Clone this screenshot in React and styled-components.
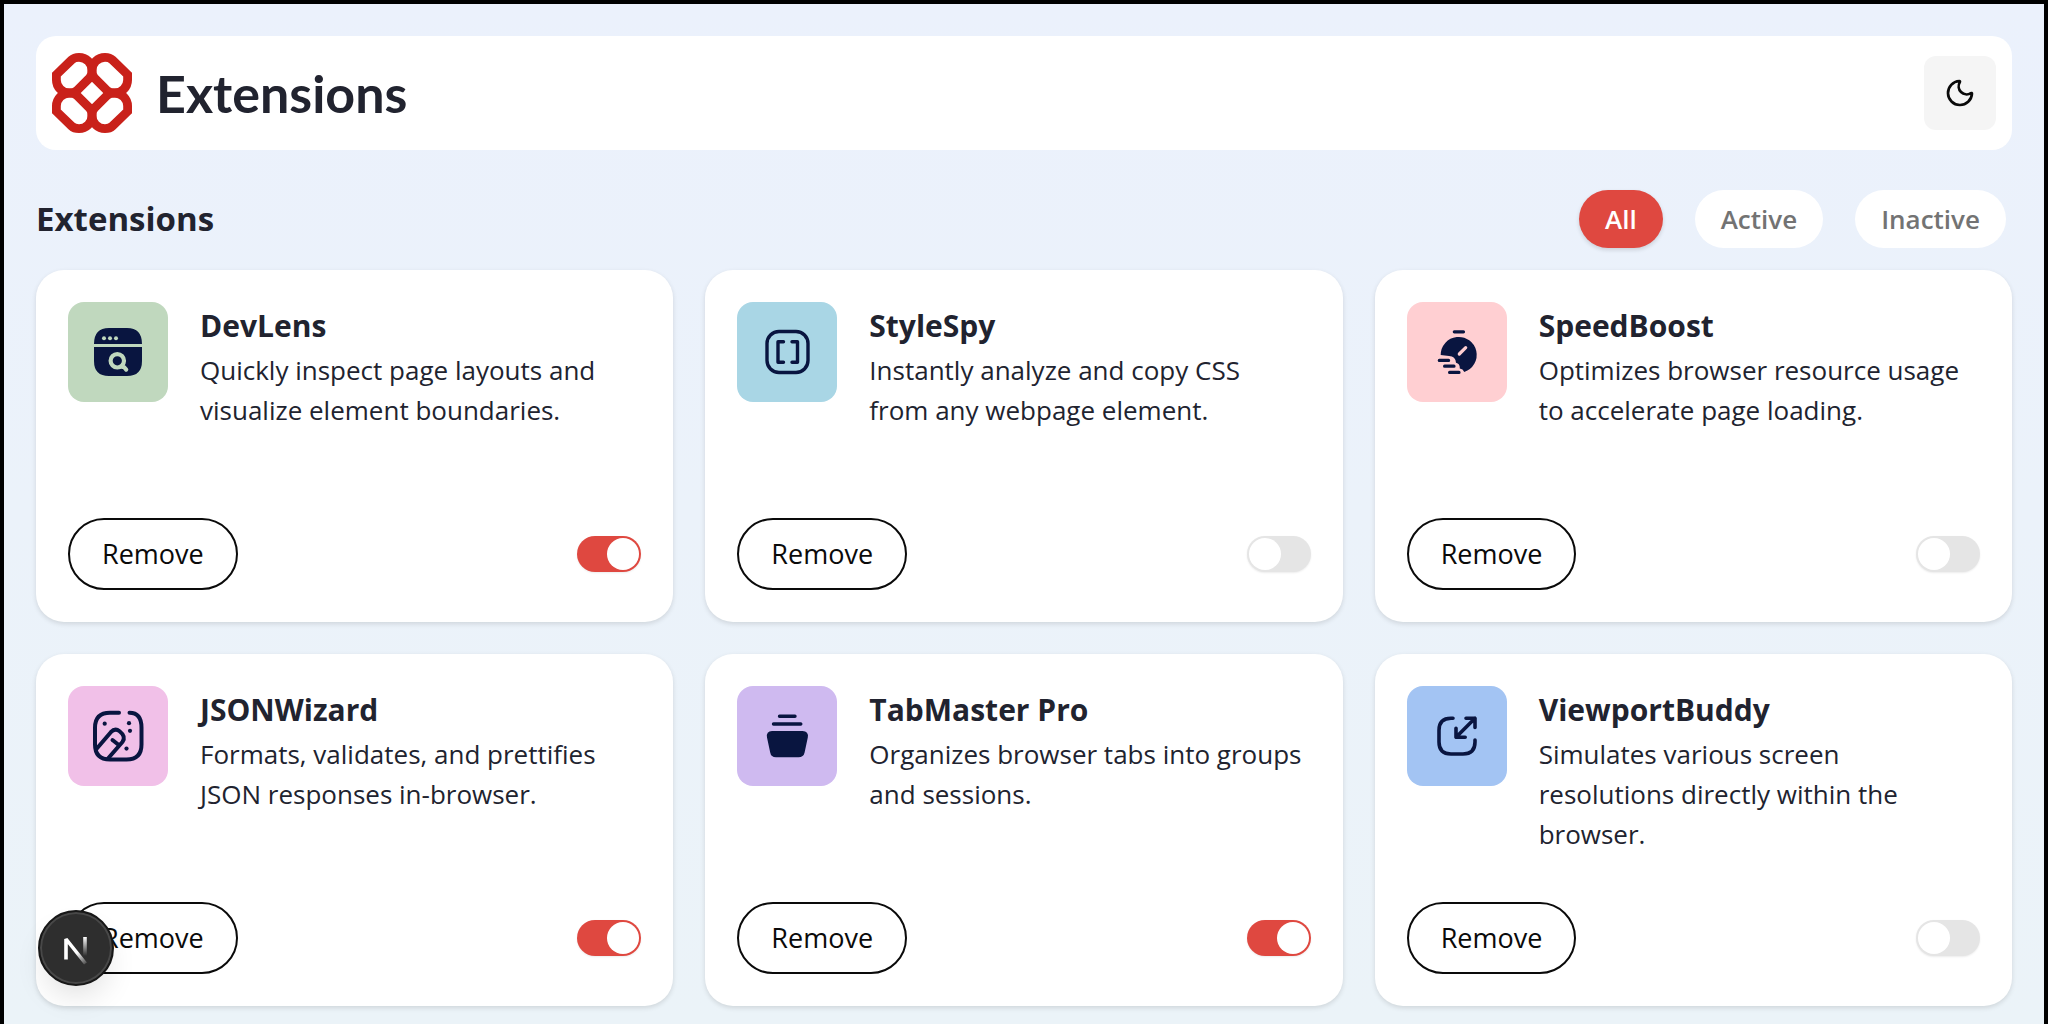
import React, { useState } from "react";
import styled, { createGlobalStyle } from "styled-components";
import { Moon } from "lucide-react";

const GlobalStyle = createGlobalStyle`
  *, *::before, *::after { box-sizing: border-box; }
  body {
    margin: 0;
    font-family: "Open Sans", "Noto Sans", sans-serif;
    color: #21232f;
  }
  h1, h2, h3, p { margin: 0; }
  button { font-family: inherit; cursor: pointer; }
`;

const Page = styled.div`
  min-height: 100vh;
  padding: 32px 32px 18px;
  border: 4px solid #000;
  border-bottom: 0;
  background: linear-gradient(180deg, #ebf1fc 0%, #ebf3f8 100%);
`;

const Header = styled.header`
  display: flex;
  align-items: center;
  gap: 24px;
  padding: 17px 16px;
  border-radius: 20px;
  background: #fff;
`;

const Logo = styled.svg`
  width: 80px;
  height: 80px;
  flex: none;
`;

const Brand = styled.h1`
  flex: 1;
  font-family: Lato, "Open Sans", sans-serif;
  font-size: 52px;
  font-weight: 700;
  line-height: 60px;
`;

const ThemeButton = styled.button`
  display: flex;
  align-items: center;
  justify-content: center;
  width: 72px;
  height: 74px;
  padding: 0;
  border: 0;
  border-radius: 12px;
  background: #f5f5f5;
  color: #0a0a0a;
`;

const Toolbar = styled.div`
  display: flex;
  flex-wrap: wrap;
  align-items: center;
  justify-content: space-between;
  gap: 16px;
  margin: 40px 0 22px;
  padding-right: 6px;
`;

const SectionTitle = styled.h2`
  font-size: 33px;
  font-weight: 700;
  line-height: 58px;
`;

const Filters = styled.div`
  display: flex;
  gap: 32px;
`;

const FilterButton = styled.button`
  height: 58px;
  padding: 0 26px;
  border: 0;
  border-radius: 29px;
  background: ${(p) => (p.$on ? "#df4840" : "#fff")};
  color: ${(p) => (p.$on ? "#fff" : "#737373")};
  box-shadow: ${(p) => (p.$on ? "0 2px 4px rgba(0, 0, 0, 0.14)" : "none")};
  font-size: 26px;
  font-weight: 600;
  line-height: 40px;
`;

const Grid = styled.main`
  display: grid;
  grid-template-columns: repeat(3, minmax(0, 1fr));
  gap: 32px;

  @media (max-width: 1500px) {
    grid-template-columns: repeat(2, minmax(0, 1fr));
  }
  @media (max-width: 960px) {
    grid-template-columns: minmax(0, 1fr);
  }
`;

const Card = styled.article`
  display: flex;
  flex-direction: column;
  justify-content: space-between;
  gap: 32px;
  min-height: 352px;
  padding: 32px;
  border-radius: 28px;
  background: #fff;
  box-shadow: 0 2px 5px rgba(0, 0, 0, 0.12);
`;

const Summary = styled.div`
  display: flex;
  align-items: flex-start;
  gap: 32px;
`;

const IconTile = styled.svg`
  width: 100px;
  height: 100px;
  flex: none;
  border-radius: 16px;
  background: ${(p) => p.$tint};
  color: #091540;
`;

const Name = styled.h3`
  font-size: 30px;
  font-weight: 700;
  line-height: 48px;
`;

const Description = styled.p`
  max-width: 434px;
  font-size: 26px;
  line-height: 40px;
`;

const Actions = styled.div`
  display: flex;
  align-items: center;
  justify-content: space-between;
`;

const RemoveButton = styled.button`
  height: 72px;
  padding: 0 32px;
  border: 2px solid #0a0a0a;
  border-radius: 36px;
  background: #fff;
  color: #0a0a0a;
  font-size: 27px;
  font-weight: 500;
  line-height: 40px;
`;

const Switch = styled.input`
  display: flex;
  appearance: none;
  width: 64px;
  height: 36px;
  margin: 0;
  padding: 2px;
  border-radius: 18px;
  background: #e5e5e5;
  box-shadow: 0 1px 2px rgba(0, 0, 0, 0.08);
  cursor: pointer;

  &::before {
    content: "";
    width: 32px;
    height: 32px;
    border-radius: 50%;
    background: #fff;
  }
  &:checked {
    justify-content: flex-end;
    background: #df4840;
  }
`;

const DevBadge = styled.button`
  position: fixed;
  left: 38px;
  bottom: 38px;
  width: 76px;
  height: 76px;
  padding: 0;
  border: 2px solid #171717;
  border-radius: 50%;
  background: #2e2e2e;
  box-shadow: inset 0 0 0 2px #484848, 0 16px 32px -8px rgba(0, 0, 0, 0.14);

  svg { display: block; }
`;

const LOBE =
  "M4.4 21.6 L19.5 7 Q22.2 4.4 27 4.4 A13 13 0 0 1 40 17.4 Q40 22.4 37.4 25.1 L25.1 37.4 Q22.4 40 17.4 40 A13 13 0 0 1 4.4 27 Z";

function BrandMark() {
  return (
    <Logo viewBox="0 0 80 80" aria-hidden="true">
      <g fill="none" stroke="#c9211a" strokeWidth="8.8">
        <path d={LOBE} />
        <path d={LOBE} transform="matrix(-1 0 0 1 80 0)" />
        <path d={LOBE} transform="matrix(1 0 0 -1 0 80)" />
        <path d={LOBE} transform="matrix(-1 0 0 -1 80 80)" />
      </g>
    </Logo>
  );
}

const stroke = {
  fill: "none",
  stroke: "currentColor",
  strokeLinecap: "round",
  strokeLinejoin: "round",
};

const EXTENSIONS = [
  {
    name: "DevLens",
    text: "Quickly inspect page layouts and visualize element boundaries.",
    tint: "#c0d8be",
    active: true,
    art: (
      <>
        <path fill="currentColor" d="M26 42 Q26 26 41 26 H59 Q74 26 74 42 Z M26 45 H74 V59 Q74 74 59 74 H41 Q26 74 26 59 Z" />
        <g fill="#c0d8be">
          <circle cx="36" cy="36.3" r="2" />
          <circle cx="42" cy="36.3" r="2" />
          <circle cx="48" cy="36.3" r="2" />
        </g>
        <g {...stroke} stroke="#c0d8be" strokeWidth="4.2">
          <circle cx="49.3" cy="58.8" r="6.7" />
          <path d="M54.5 65 h1.5 l2.2 2.6" />
        </g>
      </>
    ),
  },
  {
    name: "StyleSpy",
    text: "Instantly analyze and copy CSS from any webpage element.",
    tint: "#a9d6e5",
    active: false,
    art: (
      <g {...stroke}>
        <rect x="30" y="29.5" width="41" height="41" rx="12" strokeWidth="3.4" />
        <path d="M46.5 39.7 H41 V60.3 H46.5 M55 39.7 H60.5 V60.3 H55" strokeWidth="3.4" />
      </g>
    ),
  },
  {
    name: "SpeedBoost",
    text: "Optimizes browser resource usage to accelerate page loading.",
    tint: "#ffcfd2",
    active: false,
    art: (
      <>
        <path
          fill="currentColor"
          d="M33.7 53 A18 18 0 1 1 57.3 70 Q56 67 52.8 66.6 Q53 61.5 49 60.8 Q48.5 54.2 42 54 Z"
        />
        <g {...stroke} strokeWidth="3.2">
          <path d="M47.3 29.8 H56.5 M32.3 58.4 H41.6 M37.6 64.2 H47 M42.6 70.4 H52" />
          <path d="M52.3 52 L58.7 45.6" stroke="#ffcfd2" />
        </g>
      </>
    ),
  },
  {
    name: "JSONWizard",
    text: "Formats, validates, and prettifies JSON responses in-browser.",
    tint: "#f1c0e8",
    active: true,
    art: (
      <>
        <g {...stroke} strokeWidth="4">
          <path d="M51 26.7 H42 Q27 26.7 27 41.7 V58.5 Q27 73.5 42 73.5 H58.5 Q73.5 73.5 73.5 58.5 V41.7 Q73.5 26.7 61.5 26.7" />
          <path d="M28 63.5 L42.8 46.2 Q47 41.6 51.6 45.2 Q58.4 50.6 54.4 56 L40 72.5" />
          <path d="M44.5 54 L49.5 58" />
        </g>
        <g fill="currentColor">
          <circle cx="36.7" cy="37.7" r="2.1" />
          <circle cx="61" cy="37.2" r="2.1" />
          <circle cx="62" cy="44.8" r="2.1" />
          <circle cx="58.5" cy="62.6" r="2.1" />
        </g>
      </>
    ),
  },
  {
    name: "TabMaster Pro",
    text: "Organizes browser tabs into groups and sessions.",
    tint: "#cfbaf0",
    active: true,
    art: (
      <>
        <path d="M42.5 30.3 H58 M36.5 38 H63.8" {...stroke} strokeWidth="3.4" />
        <path
          fill="currentColor"
          d="M35 45 H65.5 Q71.8 45 70.8 51.5 L67.6 66.5 Q66.6 71.3 61.5 71.3 H39 Q34 71.3 33.2 66.5 L30 51.5 Q29 45 35 45 Z"
        />
      </>
    ),
  },
  {
    name: "ViewportBuddy",
    text: "Simulates various screen resolutions directly within the browser.",
    tint: "#a3c4f3",
    active: false,
    art: (
      <g {...stroke} strokeWidth="3.6">
        <path d="M46 32.2 H44 Q32 32.2 32 44.2 V56 Q32 68 44 68 H56 Q68 68 68 56 V54" />
        <path d="M49 51.2 L68 32.2 M59 32.2 H68 V41.4 M49 42.2 V51.2 H58.2" />
      </g>
    ),
  },
];

const FILTERS = ["All", "Active", "Inactive"];

export default function App() {
  const [items, setItems] = useState(EXTENSIONS);
  const [filter, setFilter] = useState("All");
  const shown = items.filter((e) => filter === "All" || e.active === (filter === "Active"));

  const toggle = (name) =>
    setItems(items.map((e) => (e.name === name ? { ...e, active: !e.active } : e)));
  const remove = (name) => setItems(items.filter((e) => e.name !== name));

  return (
    <>
      <GlobalStyle />
      <Page>
        <Header>
          <BrandMark />
          <Brand>Extensions</Brand>
          <ThemeButton type="button" aria-label="Toggle theme">
            <Moon size={32} strokeWidth={2} />
          </ThemeButton>
        </Header>
        <Toolbar>
          <SectionTitle>Extensions</SectionTitle>
          <Filters>
            {FILTERS.map((f) => (
              <FilterButton key={f} type="button" $on={f === filter} onClick={() => setFilter(f)}>
                {f}
              </FilterButton>
            ))}
          </Filters>
        </Toolbar>
        <Grid>
          {shown.map((e) => (
            <Card key={e.name}>
              <Summary>
                <IconTile viewBox="0 0 100 100" $tint={e.tint} aria-hidden="true">
                  {e.art}
                </IconTile>
                <div>
                  <Name>{e.name}</Name>
                  <Description>{e.text}</Description>
                </div>
              </Summary>
              <Actions>
                <RemoveButton type="button" onClick={() => remove(e.name)}>
                  Remove
                </RemoveButton>
                <Switch
                  type="checkbox"
                  role="switch"
                  aria-label={e.name}
                  checked={e.active}
                  onChange={() => toggle(e.name)}
                />
              </Actions>
            </Card>
          ))}
        </Grid>
      </Page>
      <DevBadge type="button" aria-label="Developer tools">
        <svg width="72" height="72" viewBox="2 2 72 72" fill="none" aria-hidden="true">
          <defs>
            <linearGradient id="bar" x1="0" y1="27" x2="0" y2="46" gradientUnits="userSpaceOnUse">
              <stop stopColor="#fff" />
              <stop offset="1" stopColor="#fff" stopOpacity="0" />
            </linearGradient>
            <linearGradient id="slash" x1="40" y1="42" x2="49" y2="54" gradientUnits="userSpaceOnUse">
              <stop stopColor="#fff" />
              <stop offset="1" stopColor="#fff" stopOpacity="0.1" />
            </linearGradient>
          </defs>
          <path d="M28 49.5 V29 L47.5 53.5" stroke="url(#slash)" strokeWidth="3.6" strokeLinejoin="bevel" />
          <path d="M47 27 V46" stroke="url(#bar)" strokeWidth="3.6" />
        </svg>
      </DevBadge>
    </>
  );
}
